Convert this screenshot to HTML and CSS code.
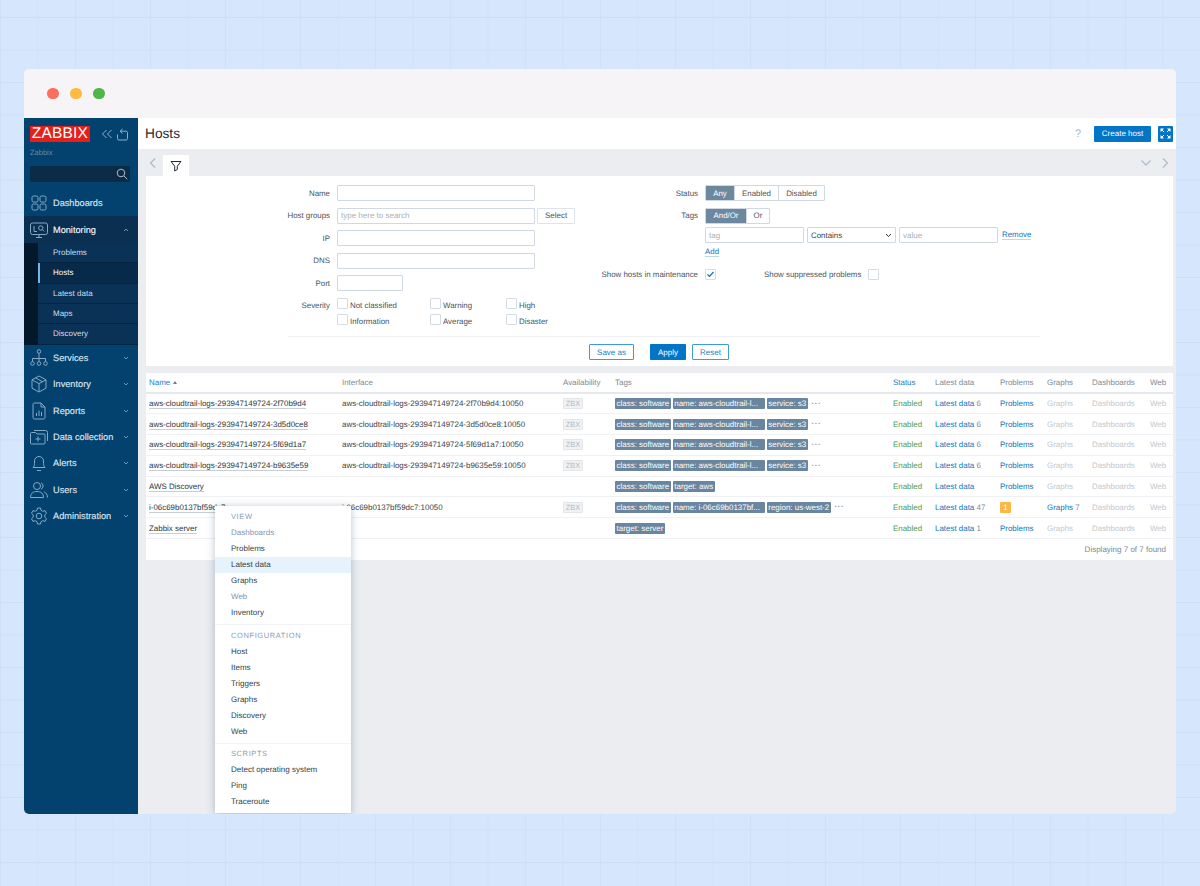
FILE: index.html
```html
<!DOCTYPE html>
<html lang="en">
<head>
    <meta charset="UTF-8">
    <title>Hosts - Zabbix</title>
    <link rel="stylesheet" href="styles.css">
</head>
<body>
    <div class="window">
        <div class="titlebar">
            <span class="dot dot-red"></span>
            <span class="dot dot-yellow"></span>
            <span class="dot dot-green"></span>
        </div>
        <div class="app">
            <!-- Sidebar -->
            <aside class="sidebar">
                <div class="brand">
                    <div class="logo">ZABBIX</div>
                    <svg class="brand-icon" width="12" height="12" viewBox="0 0 12 12"><path d="M5.500 2 1.500 6l4 4M10.500 2l-4 4 4 4"/></svg>
                    <svg class="brand-icon" width="13" height="13" viewBox="0 0 13 13"><path d="M6.500 1 4 3.200 6.500 5.500M4.500 3.200h5.500a1.500 1.500 0 0 1 1.500 1.500v5.800a1.500 1.500 0 0 1-1.500 1.500H3a1.500 1.500 0 0 1-1.500-1.500V6.500"/></svg>
                </div>
                <div class="server-name">Zabbix</div>
                <div class="side-search">
                    <svg width="12" height="12" viewBox="0 0 12 12"><circle cx="5" cy="5" r="3.800"/><path d="m8 8 3.300 3.300"/></svg>
                </div>
                <nav class="nav">
                    <a class="nav-item">
                        <svg class="nav-icon" viewBox="0 0 20 20"><rect x="3" y="3" width="6" height="6" rx="1.500"/><rect x="11" y="3" width="6" height="6" rx="1.500"/><rect x="3" y="11" width="6" height="6" rx="1.500"/><rect x="11" y="11" width="6" height="6" rx="1.500"/></svg>
                        Dashboards
                    </a>
                    <div class="nav-open">
                        <a class="nav-item nav-item-open">
                            <svg class="nav-icon" viewBox="0 0 20 20"><rect x="1.500" y="3" width="17" height="11.500" rx="2"/><path d="M7 17.500h6M10 14.500v3M5 6v5.500h3"/><circle cx="11.800" cy="8" r="2.200"/><path d="m13.400 9.600 1.800 1.800"/></svg>
                            Monitoring
                            <svg class="caret" viewBox="0 0 6 4"><path d="m1 3 2-2 2 2"/></svg>
                        </a>
                        <div class="subnav">
                            <a class="sub-item">Problems</a>
                            <a class="sub-item sub-active">Hosts</a>
                            <a class="sub-item">Latest data</a>
                            <a class="sub-item">Maps</a>
                            <a class="sub-item">Discovery</a>
                        </div>
                    </div>
                    <a class="nav-item">
                        <svg class="nav-icon" viewBox="0 0 20 20"><circle cx="10" cy="3.500" r="1.800"/><path d="M10 5.500v5M3.500 13.500v-3h13v3M10 10.500v3"/><circle cx="3.500" cy="15.500" r="1.800"/><circle cx="10" cy="15.500" r="1.800"/><circle cx="16.500" cy="15.500" r="1.800"/></svg>
                        Services
                        <svg class="caret" viewBox="0 0 6 4"><path d="m1 1 2 2 2-2"/></svg>
                    </a>
                    <a class="nav-item">
                        <svg class="nav-icon" viewBox="0 0 20 20"><path d="m10 2 7 3.800v8.400L10 18l-7-3.800V5.800zM3 5.800l7 3.800 7-3.800M10 9.600V18M6.500 3.900l7 3.800"/></svg>
                        Inventory
                        <svg class="caret" viewBox="0 0 6 4"><path d="m1 1 2 2 2-2"/></svg>
                    </a>
                    <a class="nav-item">
                        <svg class="nav-icon" viewBox="0 0 20 20"><path d="M4 3.500A1.500 1.500 0 0 1 5.500 2H12l4 4v10.500a1.500 1.500 0 0 1-1.500 1.500h-9A1.500 1.500 0 0 1 4 16.500zM12 2v4h4M7.500 15v-3M10 15V9.500M12.500 15v-4"/></svg>
                        Reports
                        <svg class="caret" viewBox="0 0 6 4"><path d="m1 1 2 2 2-2"/></svg>
                    </a>
                    <a class="nav-item">
                        <svg class="nav-icon" viewBox="0 0 20 20"><path d="M1.500 6.500a1 1 0 0 1 1-1h4l1.500 1.500h7a1 1 0 0 1 1 1v8a1 1 0 0 1-1 1h-12.500a1 1 0 0 1-1-1zM5 3.500h11.500a2 2 0 0 1 2 2V14M9 9.500v5M6.500 12h5"/></svg>
                        Data collection
                        <svg class="caret" viewBox="0 0 6 4"><path d="m1 1 2 2 2-2"/></svg>
                    </a>
                    <a class="nav-item">
                        <svg class="nav-icon" viewBox="0 0 20 20"><path d="M4 14.500c1-1 1.500-2 1.500-4V8a4.500 4.500 0 0 1 9 0v2.500c0 2 .5 3 1.500 4zM8 17.500h4"/></svg>
                        Alerts
                        <svg class="caret" viewBox="0 0 6 4"><path d="m1 1 2 2 2-2"/></svg>
                    </a>
                    <a class="nav-item">
                        <svg class="nav-icon" viewBox="0 0 20 20"><circle cx="8" cy="6" r="3.500"/><path d="M1.500 17.500c0-4 2.500-6 6.500-6s6.500 2 6.500 6zM12 2.800a3.500 3.500 0 0 1 0 6.400M15 11.800c2 .8 3.500 2.700 3.500 5.700"/></svg>
                        Users
                        <svg class="caret" viewBox="0 0 6 4"><path d="m1 1 2 2 2-2"/></svg>
                    </a>
                    <a class="nav-item">
                        <svg class="nav-icon" viewBox="0 0 20 20"><circle cx="10" cy="10" r="2.800"/><path d="m8.500 2 3 0 .5 2.300 1.700 1 2.300-.7 1.500 2.600-1.700 1.600v2.400l1.700 1.600-1.500 2.600-2.300-.7-1.700 1-.5 2.300h-3l-.5-2.300-1.700-1-2.300.7-1.500-2.600 1.700-1.600V8.800L2.500 7.200 4 4.600l2.300.7 1.700-1z"/></svg>
                        Administration
                        <svg class="caret" viewBox="0 0 6 4"><path d="m1 1 2 2 2-2"/></svg>
                    </a>
                </nav>
            </aside>

            <!-- Main content -->
            <main class="main">
                <header class="page-header">
                    <h1>Hosts</h1>
                    <span class="help">?</span>
                    <button class="btn-primary create-btn">Create host</button>
                    <button class="btn-primary fullscreen-btn">
                        <svg width="11" height="11" viewBox="0 0 11 11"><path class="arrow-line" d="m1.500 1.500 2.500 2.500M9.500 1.500 7 4M9.500 9.500 7 7M1.500 9.500 4 7"/><path class="arrow-head" d="M.5.500h3.500L.5 4zM10.500.500H7l3.500 3.500zM10.500 10.500H7L10.500 7zM.5 10.500H4L.5 7z"/></svg>
                    </button>
                </header>

                <div class="filter-tabs">
                    <svg class="tab-arrow" width="8" height="12" viewBox="0 0 8 12"><path d="M6 1.500 1.500 6 6 10.500"/></svg>
                    <div class="filter-tab">
                        <svg width="12" height="12" viewBox="0 0 12 12"><path d="M1 1.500h10L7.300 6.200v3.300l-2.600 1.500V6.200z"/></svg>
                    </div>
                    <svg class="tab-arrow tab-down" width="12" height="8" viewBox="0 0 12 8"><path d="M1.500 1.500 6 6l4.500-4.500"/></svg>
                    <svg class="tab-arrow tab-next" width="8" height="12" viewBox="0 0 8 12"><path d="M2 1.500 6.500 6 2 10.500"/></svg>
                </div>

                <section class="filter">
                    <div class="filter-cols">
                        <div class="filter-col filter-left">
                            <div class="form-row"><label>Name</label><input class="input input-wide"></div>
                            <div class="form-row"><label>Host groups</label><input class="input input-wide" placeholder="type here to search"><button class="btn-plain">Select</button></div>
                            <div class="form-row"><label>IP</label><input class="input input-wide"></div>
                            <div class="form-row"><label>DNS</label><input class="input input-wide"></div>
                            <div class="form-row"><label>Port</label><input class="input input-port"></div>
                            <div class="form-row severity-row">
                                <label>Severity</label>
                                <div class="severity-grid">
                                    <span class="check-item"><i class="checkbox"></i>Not classified</span>
                                    <span class="check-item"><i class="checkbox"></i>Warning</span>
                                    <span class="check-item"><i class="checkbox"></i>High</span>
                                    <span class="check-item"><i class="checkbox"></i>Information</span>
                                    <span class="check-item"><i class="checkbox"></i>Average</span>
                                    <span class="check-item"><i class="checkbox"></i>Disaster</span>
                                </div>
                            </div>
                        </div>
                        <div class="filter-col filter-right">
                            <div class="form-row">
                                <label>Status</label>
                                <div class="segmented">
                                    <span class="seg seg-on seg-any">Any</span><span class="seg seg-enabled">Enabled</span><span class="seg seg-disabled">Disabled</span>
                                </div>
                            </div>
                            <div class="form-row">
                                <label>Tags</label>
                                <div class="segmented">
                                    <span class="seg seg-on seg-andor">And/Or</span><span class="seg seg-or">Or</span>
                                </div>
                            </div>
                            <div class="form-row tag-row">
                                <label></label>
                                <input class="input input-tag" placeholder="tag">
                                <div class="select-box">Contains
                                    <svg width="7" height="5" viewBox="0 0 7 5"><path d="m1 1 2.500 2.500L6 1"/></svg>
                                </div>
                                <input class="input input-tag" placeholder="value">
                                <a class="link link-under">Remove</a>
                            </div>
                            <div class="form-row add-row"><label></label><a class="link link-under">Add</a></div>
                            <div class="form-row maintenance-row">
                                <label>Show hosts in maintenance</label>
                                <i class="checkbox checkbox-on">
                                    <svg width="9" height="9" viewBox="0 0 9 9"><path d="m1.500 4.500 2 2 4-4.500"/></svg>
                                </i>
                                <span class="suppressed">Show suppressed problems</span>
                                <i class="checkbox"></i>
                            </div>
                        </div>
                    </div>
                    <div class="filter-actions">
                        <button class="btn-outline save-btn">Save as</button>
                        <button class="btn-primary apply-btn">Apply</button>
                        <button class="btn-outline reset-btn">Reset</button>
                    </div>
                </section>

                <section class="hosts">
                    <table class="hosts-table">
                        <colgroup>
                            <col class="col-name"><col class="col-iface"><col class="col-avail"><col class="col-tags"><col class="col-status"><col class="col-latest"><col class="col-problems"><col class="col-graphs"><col class="col-dash"><col class="col-web">
                        </colgroup>
                        <thead>
                            <tr>
                                <th class="sorted">Name <span class="sort-arrow"></span></th>
                                <th>Interface</th>
                                <th>Availability</th>
                                <th>Tags</th>
                                <th class="sorted">Status</th>
                                <th>Latest data</th>
                                <th>Problems</th>
                                <th>Graphs</th>
                                <th>Dashboards</th>
                                <th>Web</th>
                            </tr>
                        </thead>
                        <tbody>
                            <tr>
                                <td><a class="host-link">aws-cloudtrail-logs-293947149724-2f70b9d4</a></td>
                                <td>aws-cloudtrail-logs-293947149724-2f70b9d4:10050</td>
                                <td><span class="zbx">ZBX</span></td>
                                <td class="tags"><span class="tag">class: software</span><span class="tag tag-name">name: aws-cloudtrail-l...</span><span class="tag">service: s3</span><span class="more">•••</span></td>
                                <td class="enabled">Enabled</td>
                                <td><a class="link">Latest data</a> <span class="count">6</span></td>
                                <td><a class="link">Problems</a></td>
                                <td class="off">Graphs</td>
                                <td class="off">Dashboards</td>
                                <td class="off">Web</td>
                            </tr>
                            <tr>
                                <td><a class="host-link">aws-cloudtrail-logs-293947149724-3d5d0ce8</a></td>
                                <td>aws-cloudtrail-logs-293947149724-3d5d0ce8:10050</td>
                                <td><span class="zbx">ZBX</span></td>
                                <td class="tags"><span class="tag">class: software</span><span class="tag tag-name">name: aws-cloudtrail-l...</span><span class="tag">service: s3</span><span class="more">•••</span></td>
                                <td class="enabled">Enabled</td>
                                <td><a class="link">Latest data</a> <span class="count">6</span></td>
                                <td><a class="link">Problems</a></td>
                                <td class="off">Graphs</td>
                                <td class="off">Dashboards</td>
                                <td class="off">Web</td>
                            </tr>
                            <tr>
                                <td><a class="host-link">aws-cloudtrail-logs-293947149724-5f69d1a7</a></td>
                                <td>aws-cloudtrail-logs-293947149724-5f69d1a7:10050</td>
                                <td><span class="zbx">ZBX</span></td>
                                <td class="tags"><span class="tag">class: software</span><span class="tag tag-name">name: aws-cloudtrail-l...</span><span class="tag">service: s3</span><span class="more">•••</span></td>
                                <td class="enabled">Enabled</td>
                                <td><a class="link">Latest data</a> <span class="count">6</span></td>
                                <td><a class="link">Problems</a></td>
                                <td class="off">Graphs</td>
                                <td class="off">Dashboards</td>
                                <td class="off">Web</td>
                            </tr>
                            <tr>
                                <td><a class="host-link">aws-cloudtrail-logs-293947149724-b9635e59</a></td>
                                <td>aws-cloudtrail-logs-293947149724-b9635e59:10050</td>
                                <td><span class="zbx">ZBX</span></td>
                                <td class="tags"><span class="tag">class: software</span><span class="tag tag-name">name: aws-cloudtrail-l...</span><span class="tag">service: s3</span><span class="more">•••</span></td>
                                <td class="enabled">Enabled</td>
                                <td><a class="link">Latest data</a> <span class="count">6</span></td>
                                <td><a class="link">Problems</a></td>
                                <td class="off">Graphs</td>
                                <td class="off">Dashboards</td>
                                <td class="off">Web</td>
                            </tr>
                            <tr>
                                <td><a class="host-link">AWS Discovery</a></td>
                                <td></td>
                                <td></td>
                                <td class="tags"><span class="tag">class: software</span><span class="tag">target: aws</span></td>
                                <td class="enabled">Enabled</td>
                                <td><a class="link">Latest data</a></td>
                                <td><a class="link">Problems</a></td>
                                <td class="off">Graphs</td>
                                <td class="off">Dashboards</td>
                                <td class="off">Web</td>
                            </tr>
                            <tr>
                                <td><a class="host-link">i-06c69b0137bf59dc7</a></td>
                                <td>i-06c69b0137bf59dc7:10050</td>
                                <td><span class="zbx">ZBX</span></td>
                                <td class="tags"><span class="tag">class: software</span><span class="tag tag-name">name: i-06c69b0137bf...</span><span class="tag">region: us-west-2</span><span class="more">•••</span></td>
                                <td class="enabled">Enabled</td>
                                <td><a class="link">Latest data</a> <span class="count">47</span></td>
                                <td><span class="problem-badge">1</span></td>
                                <td><a class="link">Graphs</a> <span class="count">7</span></td>
                                <td class="off">Dashboards</td>
                                <td class="off">Web</td>
                            </tr>
                            <tr>
                                <td><a class="host-link">Zabbix server</a></td>
                                <td></td>
                                <td></td>
                                <td class="tags"><span class="tag">target: server</span></td>
                                <td class="enabled">Enabled</td>
                                <td><a class="link">Latest data</a> <span class="count">1</span></td>
                                <td><a class="link">Problems</a></td>
                                <td class="off">Graphs</td>
                                <td class="off">Dashboards</td>
                                <td class="off">Web</td>
                            </tr>
                        </tbody>
                    </table>
                    <div class="table-footer">Displaying 7 of 7 found</div>
                </section>
            </main>

            <!-- Host context menu -->
            <div class="context-menu">
                <div class="menu-group">
                    <div class="menu-title">VIEW</div>
                    <a class="menu-item menu-off">Dashboards</a>
                    <a class="menu-item">Problems</a>
                    <a class="menu-item menu-hover">Latest data</a>
                    <a class="menu-item">Graphs</a>
                    <a class="menu-item menu-off">Web</a>
                    <a class="menu-item">Inventory</a>
                </div>
                <div class="menu-group">
                    <div class="menu-title">CONFIGURATION</div>
                    <a class="menu-item">Host</a>
                    <a class="menu-item">Items</a>
                    <a class="menu-item">Triggers</a>
                    <a class="menu-item">Graphs</a>
                    <a class="menu-item">Discovery</a>
                    <a class="menu-item">Web</a>
                </div>
                <div class="menu-group">
                    <div class="menu-title">SCRIPTS</div>
                    <a class="menu-item">Detect operating system</a>
                    <a class="menu-item">Ping</a>
                    <a class="menu-item">Traceroute</a>
                </div>
            </div>
        </div>
    </div>
</body>
</html>
```

FILE: styles.css
```css
* {
    margin: 0;
    padding: 0;
    box-sizing: border-box;
    font-family: 'Liberation Sans', Arial, sans-serif;
    text-rendering: geometricPrecision;
}

body {
    height: 886px;
    overflow: hidden;
    padding: 69px 24px 0;
    background-color: #d6e7fd;
    background-image:
        linear-gradient(#cddff8 1px, transparent 1px),
        linear-gradient(90deg, #cfe0f9 1px, transparent 1px);
    background-size: 37.500px 32.500px;
    background-position: 0 17px;
}

.window {
    height: 745px;
    display: flex;
    flex-direction: column;
    border-radius: 5px;
    overflow: hidden;
    background: #ebedf1;
}

.titlebar {
    height: 49px;
    flex: none;
    display: flex;
    align-items: center;
    gap: 11.500px;
    padding-left: 23px;
    background: #f6f4f7;
}

.dot {
    width: 11.500px;
    height: 11.500px;
    border-radius: 50%;
}

.dot-red { background: #fc6e5e; }
.dot-yellow { background: #fdbb41; }
.dot-green { background: #52b548; }

.app {
    flex: 1;
    display: flex;
    position: relative;
    min-height: 0;
}

/* Sidebar */
.sidebar {
    width: 114px;
    flex: none;
    padding-top: 8px;
    background: #03416f;
    color: #dbe5ee;
}

.brand {
    display: flex;
    align-items: center;
    padding-left: 6px;
    height: 16px;
}

.logo {
    width: 60px;
    height: 16px;
    margin-right: 11px;
    background: #e4201c;
    color: #fff;
    font-size: 15.500px;
    line-height: 16px;
    letter-spacing: 0.2px;
    text-align: center;
}

.brand-icon {
    margin-right: 3px;
    fill: none;
    stroke: #8fb0c9;
    stroke-width: 1;
}

.server-name {
    margin: 6px 0 0 6px;
    height: 10px;
    font-size: 7.500px;
    line-height: 10px;
    color: #5f8aab;
}

.side-search {
    height: 16px;
    margin: 8px 8px 0 6px;
    display: flex;
    align-items: center;
    justify-content: flex-end;
    padding-right: 2px;
    border-radius: 2px;
    background: #0b2b47;
}

.side-search svg {
    fill: none;
    stroke: #a9bccb;
    stroke-width: 1;
}

.nav {
    margin-top: 8px;
}

.nav-item {
    height: 26.400px;
    display: flex;
    align-items: center;
    padding: 0 9px 0 5px;
    gap: 4px;
    font-size: 9.200px;
    color: #dbe5ee;
    -webkit-text-stroke: 0.15px #dbe5ee;
}

.nav-icon {
    width: 20px;
    height: 20px;
    flex: none;
    fill: none;
    stroke: #86a9c4;
    stroke-width: 1;
}

.caret {
    width: 6px;
    height: 4px;
    margin-left: auto;
    fill: none;
    stroke: #6f96b3;
    stroke-width: 1;
}

.nav-open {
    background: #04182c;
}

.nav-item-open {
    background: #0a2f50;
    color: #fff;
}

.subnav {
    margin-left: 14px;
}

.sub-item {
    display: block;
    height: 20.400px;
    padding-left: 15px;
    font-size: 8px;
    line-height: 20px;
    color: #d3dfe9;
    background: #0a3257;
    border-bottom: 1px solid #062440;
}

.sub-active {
    background: #07294a;
    color: #fff;
    box-shadow: inset 2px 0 0 #6fb8e8;
}

/* Page header */
.main {
    flex: 1;
    min-width: 0;
    padding: 0 3px 0 8px;
}

.page-header {
    height: 31px;
    margin: 0 -3px 0 -8px;
    padding: 0 3px 0 7px;
    display: flex;
    align-items: center;
    background: #fff;
}

.page-header h1 {
    font-size: 13.700px;
    font-weight: normal;
    color: #1f2c33;
}

.help {
    margin-left: auto;
    margin-right: 13px;
    font-size: 11px;
    color: #a9b4c0;
}

button {
    border: none;
    font-size: 8px;
    border-radius: 1px;
}

.btn-primary {
    background: #0275c9;
    color: #fff;
}

.create-btn {
    width: 57px;
    height: 16px;
}

.fullscreen-btn {
    width: 15px;
    height: 16px;
    margin-left: 7px;
    display: flex;
    align-items: center;
    justify-content: center;
}

.arrow-line {
    fill: none;
    stroke: #fff;
    stroke-width: 1;
}

.arrow-head {
    fill: #fff;
}

/* Filter */
.filter-tabs {
    height: 27px;
    display: flex;
    align-items: flex-end;
    position: relative;
    padding-left: 3px;
}

.tab-arrow {
    fill: none;
    stroke: #b3bdca;
    stroke-width: 1.300;
    align-self: center;
}

.filter-tab {
    width: 26px;
    height: 21px;
    margin-left: 6px;
    display: flex;
    align-items: center;
    justify-content: center;
    background: #fff;
}

.filter-tab svg {
    fill: none;
    stroke: #1f2c33;
    stroke-width: 1;
}

.tab-down {
    margin-left: auto;
    margin-right: 9px;
}

.tab-next {
    margin-right: 4px;
}

.filter {
    height: 190px;
    background: #fff;
    padding-top: 9px;
}

.filter-cols {
    display: flex;
    height: 151px;
}

.filter-col {
    font-size: 7.900px;
    color: #4b5560;
}

.filter-left {
    width: 429px;
    flex: none;
}

.form-row {
    display: flex;
    align-items: center;
    height: 16px;
    margin-bottom: 6.500px;
}

.form-row label {
    flex: none;
    width: 184px;
    margin-right: 7px;
    text-align: right;
}

.filter-right .form-row label {
    width: 123px;
}

.input {
    flex: none;
    height: 16px;
    border: 1px solid #cfd8e4;
    border-radius: 1px;
    background: #fff;
    font-size: 8px;
    padding: 0 3px;
    outline: none;
}

.input::placeholder {
    color: #a8b0b8;
}

.input-wide {
    width: 198px;
}

.input-port {
    width: 66px;
}

.btn-plain {
    width: 38px;
    height: 16px;
    margin-left: 2px;
    background: #fff;
    border: 1px solid #dfe4ea;
    color: #4b5560;
}

.severity-row {
    align-items: flex-start;
    height: 28px;
    margin: 1px 0 0;
}

.severity-row label {
    line-height: 15px;
}

.severity-grid {
    display: grid;
    grid-template-columns: 93px 76px auto;
    grid-auto-rows: 16px;
}

.check-item {
    display: flex;
    align-items: flex-start;
    line-height: 15px;
}

.checkbox {
    display: flex;
    align-items: center;
    justify-content: center;
    width: 11px;
    height: 11px;
    flex: none;
    border: 1px solid #d5dce5;
    border-radius: 1px;
    background: #fff;
}

.check-item .checkbox {
    margin-right: 2px;
}

.checkbox svg {
    fill: none;
    stroke: #0275c9;
    stroke-width: 1.200;
}

.segmented {
    display: flex;
    height: 16px;
    border: 1px solid #cfd8e4;
    border-radius: 1px;
}

.seg {
    display: flex;
    align-items: center;
    justify-content: center;
    border-left: 1px solid #cfd8e4;
}

.seg:first-child {
    border-left: none;
}

.seg-on {
    background: #6c889f;
    color: #fff;
}

.seg-any { width: 28px; }
.seg-enabled { width: 44px; }
.seg-disabled { width: 46px; }
.seg-andor { width: 40px; }
.seg-or { width: 23px; }

.tag-row {
    margin: -3px 0 0;
}

.input-tag {
    width: 99px;
}

.select-box {
    width: 89px;
    height: 16px;
    margin: 0 3px;
    padding: 0 3px;
    display: flex;
    align-items: center;
    justify-content: space-between;
    border: 1px solid #cfd8e4;
    border-radius: 1px;
    color: #39434c;
}

.select-box svg {
    fill: none;
    stroke: #333;
    stroke-width: 1;
}

.tag-row .link {
    margin-left: 4px;
}

.link {
    color: #0f75bd;
}

.link-under {
    border-bottom: 1px solid #bcd8ee;
}

.add-row {
    height: 10px;
    margin: 4px 0 0;
}

.maintenance-row {
    height: 11px;
    margin: 12px 0 0;
}

.suppressed {
    margin: 0 7px 0 48px;
}

.filter-actions {
    margin: 0 133px 0 142px;
    padding-top: 7px;
    height: 30px;
    border-top: 1px solid #f1f2f4;
    display: flex;
    padding-left: 301px;
}

.btn-outline {
    height: 16px;
    background: #fff;
    border: 1px solid #3f9bd8;
    color: #2280c4;
}

.save-btn { width: 45px; }
.reset-btn { width: 37px; }

.apply-btn {
    width: 36px;
    height: 16px;
    margin: 0 6px 0 16px;
}

/* Hosts table */
.hosts {
    margin-top: 7px;
    background: #fff;
}

.hosts-table {
    width: 100%;
    table-layout: fixed;
    border-collapse: collapse;
    font-size: 7.950px;
    color: #38424b;
}

.col-name { width: 193px; }
.col-iface { width: 221px; }
.col-avail { width: 52px; }
.col-tags { width: 278px; }
.col-status { width: 42px; }
.col-latest { width: 65px; }
.col-problems { width: 47px; }
.col-graphs { width: 45px; }
.col-dash { width: 58px; }

.hosts-table th {
    height: 20px;
    padding-left: 3px;
    text-align: left;
    font-weight: normal;
    color: #7d8994;
    border-bottom: 2px solid #e5e8ee;
}

.hosts-table th.sorted {
    color: #1b7cc2;
}

.sort-arrow {
    display: inline-block;
    margin-left: 1px;
    border: 2.500px solid transparent;
    border-top: none;
    border-bottom: 3.500px solid #6e7b88;
    vertical-align: 1px;
}

.hosts-table td {
    height: 20.800px;
    padding: 0 0 0 3px;
    white-space: nowrap;
    overflow: hidden;
    border-bottom: 1px solid #eff1f4;
}

.host-link {
    color: #2c353d;
    border-bottom: 1px solid #c6ced6;
}

.zbx {
    display: inline-block;
    width: 20px;
    height: 11px;
    font-size: 7.500px;
    line-height: 10px;
    text-align: center;
    color: #b5bcc4;
    background: #f0f2f4;
    border: 1px solid #e2e5e9;
    border-radius: 1px;
}

.tags {
    font-size: 0;
}

.tag {
    display: inline-block;
    height: 11px;
    margin-right: 2px;
    padding: 0 1.600px;
    font-size: 7.950px;
    line-height: 11px;
    vertical-align: middle;
    color: #fff;
    background: #6a869e;
    border-radius: 1px;
}

.tag-name {
    width: 92px;
}

.more {
    margin-left: 2px;
    font-size: 5px;
    letter-spacing: 1.500px;
    color: #8a97a4;
    vertical-align: middle;
}

.enabled {
    color: #4d9a4f;
}

.count {
    color: #7f8a94;
}

.off {
    color: #c2c7cd;
}

.problem-badge {
    display: inline-block;
    width: 11px;
    height: 11px;
    line-height: 11px;
    text-align: center;
    color: #fff;
    background: #fcb846;
    border-radius: 1px;
}

.table-footer {
    height: 21px;
    padding-right: 7px;
    text-align: right;
    font-size: 8px;
    line-height: 21px;
    color: #7d8792;
}

/* Host context menu */
.context-menu {
    position: absolute;
    left: 191px;
    top: 388px;
    width: 136px;
    height: 307px;
    padding-top: 3px;
    background: #fff;
    box-shadow: 0 1px 8px rgba(60, 80, 110, 0.35);
    font-size: 8px;
}

.menu-group {
    padding-bottom: 3px;
    margin-bottom: 2.500px;
    border-bottom: 1px solid #f1f3f5;
}

.menu-group:last-child {
    border-bottom: none;
    margin-bottom: 0;
}

.menu-title {
    height: 16px;
    padding-left: 16px;
    line-height: 16px;
    font-size: 7.500px;
    letter-spacing: 0.6px;
    color: #8b9cb3;
}

.menu-item {
    display: block;
    height: 16px;
    padding-left: 16px;
    line-height: 16px;
    color: #343d46;
}

.menu-off {
    color: #7f94b0;
}

.menu-hover {
    background: #e6f2fc;
}
```
